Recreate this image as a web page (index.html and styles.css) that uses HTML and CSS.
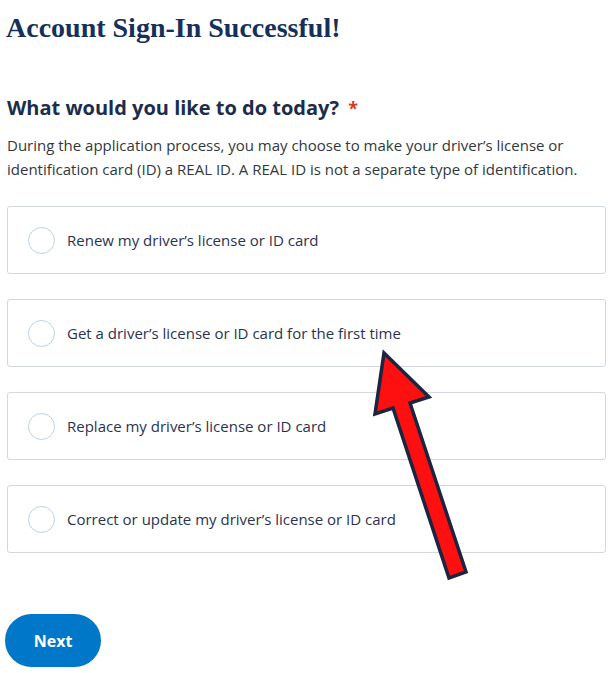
FILE: index.html
```html
<!DOCTYPE html>
<html lang="en">
<head>
<meta charset="utf-8">
<title>Account Sign-In Successful</title>
<link rel="stylesheet" href="styles.css">
</head>
<body>
<main class="page">
  <h1 class="title">Account Sign-In Successful!</h1>
  <section class="question">
    <h2 class="q-title">What would you like to do today? <span class="req">*</span></h2>
    <p class="q-desc">During the application process, you may choose to make your driver’s license or identification card (ID) a REAL ID. A REAL ID is not a separate type of identification.</p>
    <div class="options">
      <label class="option"><span class="radio"></span><span class="opt-text">Renew my driver’s license or ID card</span></label>
      <label class="option"><span class="radio"></span><span class="opt-text">Get a driver’s license or ID card for the first time</span></label>
      <label class="option"><span class="radio"></span><span class="opt-text">Replace my driver’s license or ID card</span></label>
      <label class="option"><span class="radio"></span><span class="opt-text">Correct or update my driver’s license or ID card</span></label>
    </div>
    <button class="next">Next</button>
  </section>
  <svg class="arrow" width="612" height="673" viewBox="0 0 612 673">
    <polygon points="384,353 429,397 410,403 466,572 449,578 393,408 375,414" fill="#ff1010" stroke="#1b2540" stroke-width="3.5" stroke-linejoin="miter"/>
  </svg>
</main>
</body>
</html>
```
FILE: styles.css
```css
html, body {
  margin: 0;
  padding: 0;
  background: #ffffff;
}
.page {
  position: relative;
  padding: 0 6px 0 7px;
  width: 612px;
  height: 673px;
  box-sizing: border-box;
  overflow: hidden;
}
.title {
  margin: 0;
  padding-top: 11px;
  margin-left: -1px;
  font-family: "Liberation Serif", "Times New Roman", serif;
  font-weight: bold;
  font-size: 28px;
  line-height: 34px;
  color: #15305a;
}
.question {
  margin-top: 49px;
}
.q-title {
  margin: 0;
  font-family: "Open Sans", sans-serif;
  font-weight: 700;
  font-size: 20px;
  line-height: 28px;
  color: #1b2d4b;
}
.req {
  color: #d9381e;
  font-size: 18px;
  margin-left: 4px;
}
.q-desc {
  margin: 11px 0 0;
  font-family: "Open Sans", sans-serif;
  font-size: 15px;
  line-height: 24px;
  color: #333840;
}
.options {
  margin-top: 25px;
  display: flex;
  flex-direction: column;
  gap: 25px;
}
.option {
  display: flex;
  align-items: center;
  height: 68px;
  box-sizing: border-box;
  border: 1px solid #d3d8de;
  border-radius: 3px;
  padding-left: 20px;
}
.radio {
  width: 27px;
  height: 27px;
  box-sizing: border-box;
  border: 1.5px solid #b9d3e6;
  border-radius: 50%;
  flex: none;
}
.opt-text {
  margin-left: 12px;
  font-family: "Open Sans", sans-serif;
  font-size: 15px;
  color: #2b3350;
}
.next {
  display: block;
  margin-top: 61px;
  margin-left: -2px;
  width: 96px;
  height: 53px;
  border: none;
  border-radius: 27px;
  background: #0077c8;
  color: #ffffff;
  font-family: "Open Sans", sans-serif;
  font-weight: 700;
  font-size: 16px;
}
.arrow {
  position: absolute;
  left: 0;
  top: 0;
  pointer-events: none;
}
```
